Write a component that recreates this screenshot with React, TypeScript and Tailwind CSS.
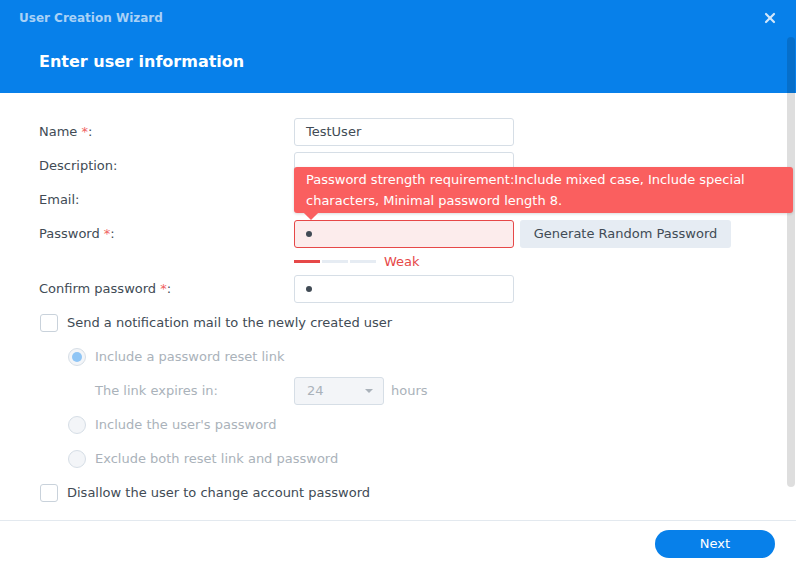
import React from 'react';
import { X } from 'lucide-react';

const font = { fontFamily: '"DejaVu Sans", Verdana, sans-serif' };

const Required = () => <span className="text-[#f0625f]">*</span>;

const TextBox = ({ value = '', error = false }: { value?: string; error?: boolean }) => (
  <div
    className={`flex h-[28px] w-[220px] items-center rounded-[3px] border px-[11px] text-[13px] ${
      error ? 'border-[#e64848] bg-[#fcecec]' : 'border-[#d6dee6] bg-white'
    }`}
  >
    {value}
  </div>
);

const Dot = () => <span className="block h-[6px] w-[6px] rounded-full bg-[#414b55]" />;

const Checkbox = () => (
  <span className="block h-[18px] w-[18px] rounded-[3px] border border-[#c9d2db] bg-white" />
);

const Radio = ({ checked = false }: { checked?: boolean }) => (
  <span className="flex h-[18px] w-[18px] items-center justify-center rounded-full border border-[#d6dee6] bg-[#f3f5f8]">
    {checked && <span className="block h-[10px] w-[10px] rounded-full bg-[#8fc5f5]" />}
  </span>
);

const FormRow = ({ label, children }: { label: React.ReactNode; children?: React.ReactNode }) => (
  <div className="flex h-[34px] items-center">
    <div className="w-[255px] shrink-0">{label}</div>
    {children}
  </div>
);

export default function App() {
  return (
    <div className="relative flex h-[565px] w-[796px] flex-col overflow-hidden bg-white text-[#414b55]" style={font}>
      {/* header */}
      <div className="h-[93px] shrink-0 bg-[#0780ea]">
        <div className="flex h-[35px] items-center justify-between pl-[19px] pr-[18px]">
          <span className="text-[12px] font-bold text-[#a9d1f6]">User Creation Wizard</span>
          <X size={16} strokeWidth={3.2} className="text-[#d2e7fb]" />
        </div>
        <div className="pl-[39px] pt-[15px] text-[16px] font-bold text-white">Enter user information</div>
      </div>

      {/* body */}
      <div className="flex-1 px-[39px] pt-[22px] text-[13px]">
        <FormRow label={<>Name <Required />:</>}>
          <TextBox value="TestUser" />
        </FormRow>
        <FormRow label="Description:">
          <TextBox />
        </FormRow>
        <FormRow label="Email:" />
        <FormRow label={<>Password <Required />:</>}>
          <div className="relative flex items-center gap-[6px]">
            <div className="absolute left-0 top-[-53px] z-10 w-[499px] rounded-[3px] bg-[#fa5f5f] px-[12px] py-[2px] text-[13px] leading-[21px] text-white shadow-[0_1px_3px_rgba(0,0,0,0.15)]">
              Password strength requirement:Include mixed case, Include special characters, Minimal password length 8.
              <span className="absolute bottom-[-5px] left-[12px] h-[10px] w-[10px] rotate-45 bg-[#fa5f5f]" />
            </div>
            <div className="flex h-[28px] w-[220px] items-center rounded-[3px] border border-[#e64848] bg-[#fcecec] px-[11px]">
              <Dot />
            </div>
            <button className="h-[28px] w-[211px] rounded-[3px] bg-[#e6ecf3] text-[13px] text-[#414b55]">
              Generate Random Password
            </button>
          </div>
        </FormRow>
        <div className="flex h-[21px] items-center pl-[255px]">
          <div className="flex gap-[2px]">
            <span className="block h-[3px] w-[26px] bg-[#e64848]" />
            <span className="block h-[3px] w-[26px] bg-[#e6ecf3]" />
            <span className="block h-[3px] w-[26px] bg-[#e6ecf3]" />
          </div>
          <span className="ml-[8px] text-[#e64848]">Weak</span>
        </div>
        <FormRow label={<>Confirm password <Required />:</>}>
          <div className="flex h-[28px] w-[220px] items-center rounded-[3px] border border-[#d6dee6] px-[11px]">
            <Dot />
          </div>
        </FormRow>

        <div className="flex h-[34px] items-center gap-[9px] pl-[1px]">
          <Checkbox />
          <span>Send a notification mail to the newly created user</span>
        </div>
        <div className="pl-[29px] text-[#aab2ba]">
          <div className="flex h-[34px] items-center gap-[9px]">
            <Radio checked />
            <span>Include a password reset link</span>
          </div>
          <div className="flex h-[34px] items-center">
            <span className="w-[226px] shrink-0 pl-[27px]">The link expires in:</span>
            <div className="flex h-[28px] w-[90px] items-center justify-between rounded-[3px] border border-[#d6dee6] bg-[#f3f5f8] pl-[12px] pr-[10px]">
              <span>24</span>
              <span className="block h-0 w-0 border-x-[4px] border-t-[4px] border-x-transparent border-t-[#aab2ba]" />
            </div>
            <span className="ml-[7px]">hours</span>
          </div>
          <div className="flex h-[34px] items-center gap-[9px]">
            <Radio />
            <span>Include the user's password</span>
          </div>
          <div className="flex h-[34px] items-center gap-[9px]">
            <Radio />
            <span>Exclude both reset link and password</span>
          </div>
        </div>
        <div className="flex h-[34px] items-center gap-[9px] pl-[1px]">
          <Checkbox />
          <span>Disallow the user to change account password</span>
        </div>
      </div>

      {/* footer */}
      <div className="flex h-[45px] shrink-0 items-start justify-end border-t border-[#e3e9ef] pr-[21px] pt-[9px]">
        <button className="h-[28px] w-[120px] rounded-full bg-[#0780ea] text-[13px] text-white">Next</button>
      </div>

      {/* scrollbar */}
      <div className="absolute right-[1px] top-[37px] h-[450px] w-[8px] rounded-full bg-black/[0.13]" />
    </div>
  );
}
